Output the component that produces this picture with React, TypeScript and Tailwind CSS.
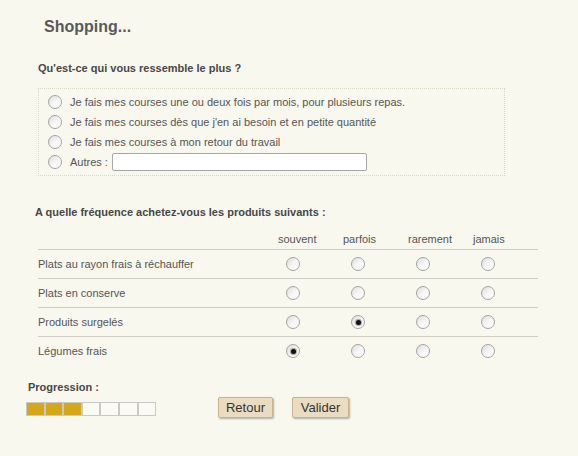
import clsx from 'clsx'

const options = [
  'Je fais mes courses une ou deux fois par mois, pour plusieurs repas.',
  "Je fais mes courses dès que j'en ai besoin et en petite quantité",
  'Je fais mes courses à mon retour du travail',
]

const columns = ['souvent', 'parfois', 'rarement', 'jamais']

const products: { label: string; checked: number }[] = [
  { label: 'Plats au rayon frais à réchauffer', checked: -1 },
  { label: 'Plats en conserve', checked: -1 },
  { label: 'Produits surgelés', checked: 1 },
  { label: 'Légumes frais', checked: 0 },
]

function Radio({ checked = false, className }: { checked?: boolean; className?: string }) {
  return (
    <span
      className={clsx(
        'flex h-[14px] w-[14px] shrink-0 items-center justify-center rounded-full border border-[#a3a3a3] bg-linear-to-br from-[#dcdcdc] via-[#f6f6f6] to-white',
        className,
      )}
    >
      {checked && <span className="h-[5px] w-[5px] rounded-full bg-[#111] shadow-[0_0_1px_1px_rgba(0,0,0,0.35)]" />}
    </span>
  )
}

export default function App() {
  return (
    <div className="h-[456px] w-full bg-[#f9f8ef] font-['Liberation_Sans',Arial,sans-serif] text-[11px] text-[#555]">
      <div className="pt-[17px]">
        <h1 className="ml-[44px] h-[20px] text-[16px] leading-[20px] font-bold text-[#5a5a5a]">Shopping...</h1>

        <p className="mt-[24px] ml-[38px] h-[14px] leading-[14px] font-bold text-[#474747]">
          Qu'est-ce qui vous ressemble le plus ?
        </p>

        <div className="mt-[13px] ml-[38px] h-[88px] w-[467px] border border-dotted border-[#d9d6c6] px-[9px] pt-[3px]">
          {options.map((o) => (
            <div key={o} className="flex h-[20px] items-center gap-[8px]">
              <Radio />
              <span className="leading-[14px]">{o}</span>
            </div>
          ))}
          <div className="flex h-[20px] items-center gap-[8px]">
            <Radio />
            <span className="leading-[14px]">Autres :</span>
            <input
              type="text"
              className="-ml-[4px] h-[18px] w-[255px] rounded-[2px] border border-[#a7a7a7] bg-white outline-none"
            />
          </div>
        </div>

        <p className="mt-[29px] ml-[35px] h-[14px] leading-[14px] font-bold text-[#474747]">
          A quelle fréquence achetez-vous les produits suivants :
        </p>

        <div className="mt-[10px] ml-[38px] w-[500px]">
          <div className="grid h-[20px] grid-cols-[240px_65px_65px_65px_65px] items-center">
            <span />
            {columns.map((c) => (
              <span key={c} className="leading-[14px]">
                {c}
              </span>
            ))}
          </div>
          {products.map((p) => (
            <div
              key={p.label}
              className="grid h-[29px] grid-cols-[240px_65px_65px_65px_65px] items-center border-t border-[#cfcdc6]"
            >
              <span className="leading-[14px]">{p.label}</span>
              {columns.map((c, i) => (
                <span key={c} className="flex pl-[8px]">
                  <Radio checked={p.checked === i} />
                </span>
              ))}
            </div>
          ))}
        </div>

        <div className="mt-[15px] ml-[26px] flex items-start">
          <div className="w-[192px]">
            <p className="ml-[2px] h-[14px] leading-[14px] font-bold text-[#474747]">Progression :</p>
            <div className="mt-[8px] flex">
              {[0, 1, 2, 3, 4, 5, 6].map((i) => (
                <span
                  key={i}
                  className={clsx(
                    'h-[14px] w-[18.6px] border border-[#c9c9c9]',
                    i < 3 ? 'bg-[#d5a71b]' : 'bg-[#fbfaf4]',
                  )}
                />
              ))}
            </div>
          </div>
          <div className="mt-[17px] flex gap-[19px]">
            <button
              type="button"
              className="h-[21px] w-[55px] rounded-[2px] border border-[#c6b38f] bg-[#eadcc0] text-[13px] leading-[19px] text-[#333] shadow-[1px_1px_2px_rgba(0,0,0,0.3)]"
            >
              Retour
            </button>
            <button
              type="button"
              className="h-[21px] w-[57px] rounded-[2px] border border-[#c6b38f] bg-[#eadcc0] text-[13px] leading-[19px] text-[#333] shadow-[1px_1px_2px_rgba(0,0,0,0.3)]"
            >
              Valider
            </button>
          </div>
        </div>
      </div>
    </div>
  )
}
